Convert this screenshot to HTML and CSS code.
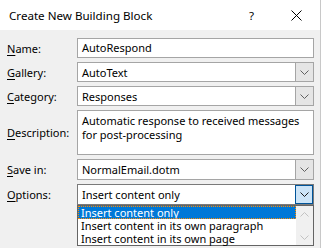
FILE: index.html
```html
<!DOCTYPE html>
<html lang="en">

<head>
    <meta charset="UTF-8">
    <title>Create New Building Block</title>
    <link rel="stylesheet" href="styles.css">
</head>

<body>
    <div class="dialog">
        <div class="title-bar">
            <span class="title">Create New Building Block</span>
            <span class="help">?</span>
            <svg class="close" width="11" height="11" viewBox="0 0 11 11">
                <path d="M0.5 0.5 L10.5 10.5 M10.5 0.5 L0.5 10.5" stroke="#000" stroke-width="1" fill="none"/>
            </svg>
        </div>

        <div class="form">
            <label class="label"><u>N</u>ame:</label>
            <div class="textbox">AutoRespond</div>

            <label class="label"><u>G</u>allery:</label>
            <div class="combo">
                <span class="value">AutoText</span>
                <span class="drop-btn">
                    <svg width="9" height="5" viewBox="0 0 9 5"><path d="M0.5 0.5 L4.5 4.5 L8.5 0.5" stroke="#606060" fill="none"/></svg>
                </span>
            </div>

            <label class="label"><u>C</u>ategory:</label>
            <div class="combo">
                <span class="value">Responses</span>
                <span class="drop-btn">
                    <svg width="9" height="5" viewBox="0 0 9 5"><path d="M0.5 0.5 L4.5 4.5 L8.5 0.5" stroke="#606060" fill="none"/></svg>
                </span>
            </div>

            <label class="label"><u>D</u>escription:</label>
            <div class="textarea">Automatic response to received messages<br>for post-processing</div>

            <label class="label"><u>S</u>ave in:</label>
            <div class="combo">
                <span class="value">NormalEmail.dotm</span>
                <span class="drop-btn">
                    <svg width="9" height="5" viewBox="0 0 9 5"><path d="M0.5 0.5 L4.5 4.5 L8.5 0.5" stroke="#606060" fill="none"/></svg>
                </span>
            </div>

            <label class="label"><u>O</u>ptions:</label>
            <div class="combo open">
                <span class="value">Insert content only</span>
                <span class="drop-btn">
                    <svg width="9" height="5" viewBox="0 0 9 5"><path d="M0.5 0.5 L4.5 4.5 L8.5 0.5" stroke="#1a1a1a" fill="none"/></svg>
                </span>

                <!-- lista otvorena ispod combo boxa -->
                <div class="dropdown">
                    <ul class="items">
                        <li class="selected">Insert content only</li>
                        <li>Insert content in its own paragraph</li>
                        <li>Insert content in its own page</li>
                    </ul>
                    <div class="scrollbar">
                        <svg width="9" height="5" viewBox="0 0 9 5"><path d="M0.5 4.5 L4.5 0.5 L8.5 4.5" stroke="#c2c2c2" fill="none"/></svg>
                        <svg width="9" height="5" viewBox="0 0 9 5"><path d="M0.5 0.5 L4.5 4.5 L8.5 0.5" stroke="#c2c2c2" fill="none"/></svg>
                    </div>
                </div>
            </div>
        </div>
    </div>
</body>

</html>
```

FILE: styles.css
```css
body {
    margin: 0;
    padding: 0;
    font-family: "Noto Sans", sans-serif;
    font-size: 11px;
    color: #000;
    background-color: #f0f0f0;
}

.dialog {
    width: 320px;
    height: 248px;
    border-right: 1px solid #c8c8c8;
    background-color: #f0f0f0;
    overflow: hidden;
}

.title-bar {
    height: 30px;
    background-color: #fff;
    display: flex;
    align-items: center;
    padding-left: 9px;
    font-size: 11.6px;
}

.title {
    flex: 1;
}

.help {
    margin-right: 37px;
}

.close {
    margin-right: 18px;
}

.form {
    display: grid;
    grid-template-columns: 70px 237px;
    grid-template-rows: 20px 20px 20px 45px 21px 21px;
    row-gap: 4px;
    padding: 8px 0 0 7px;
}

.label {
    display: flex;
    align-items: center;
}

.label u {
    text-underline-offset: 2px;
}

.textbox,
.textarea,
.combo {
    box-sizing: border-box;
    background-color: #fff;
    border: 1px solid #a5a5a5;
}

.textbox {
    padding: 0 4px;
    line-height: 18px;
}

.textarea {
    padding: 3px 4px;
    line-height: 14px;
    white-space: nowrap;
}

.combo {
    position: relative;
    display: flex;
    align-items: center;
}

.combo .value {
    flex: 1;
    padding-left: 4px;
}

.drop-btn {
    box-sizing: border-box;
    width: 18px;
    height: 100%;
    background-color: #e5e5e5;
    border-left: 1px solid #a5a5a5;
    display: flex;
    align-items: center;
    justify-content: center;
}

.combo.open {
    border-color: #7a7a7a;
}

.combo.open .drop-btn {
    background-color: #cce4f7;
    border: 1px solid #005499;
}

.dropdown {
    position: absolute;
    top: 20px;
    left: -1px;
    width: 237px;
    height: 41px;
    box-sizing: border-box;
    border: 1px solid #646464;
    background-color: #fff;
    display: flex;
}

.items {
    flex: 1;
    list-style-type: none;
    margin: 0;
    padding: 0;
}

.items li {
    height: 13px;
    line-height: 13px;
    padding-left: 3px;
    white-space: nowrap;
}

.items li.selected {
    background-color: #0078d7;
    color: #fff;
    outline: 1px dotted #ff8c00;
    outline-offset: -1px;
}

.scrollbar {
    width: 17px;
    background-color: #f0f0f0;
    display: flex;
    flex-direction: column;
    align-items: center;
    justify-content: space-between;
    padding: 6px 0 5px;
}
```
